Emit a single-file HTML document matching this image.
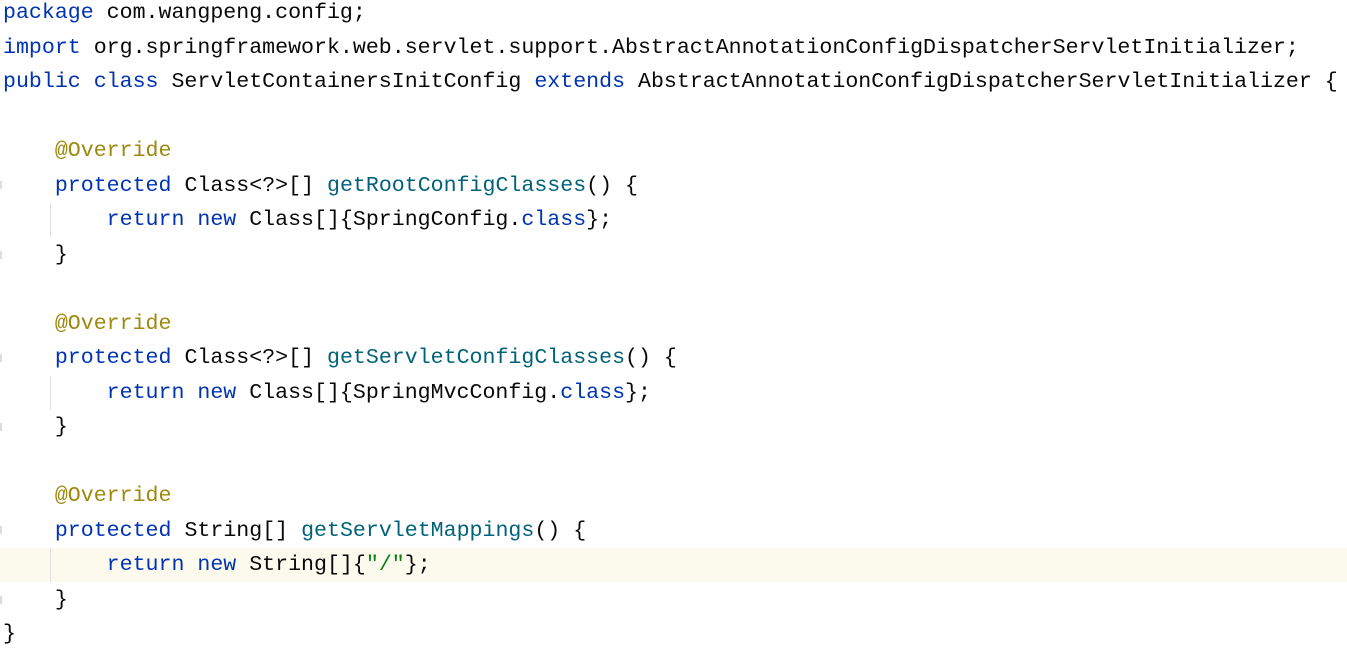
<!DOCTYPE html>
<html><head><meta charset="utf-8"><style>
body{margin:0;width:1347px;height:646px;background:#fff;overflow:hidden;position:relative;font-family:"Liberation Mono",monospace;font-size:21.6px;color:#080808}
.l{position:absolute;left:3px;height:34.5px;line-height:34.5px;white-space:pre}
.k{color:#0033b3}.m{color:#00627a}.a{color:#9e880d}.s{color:#067d17}
.hl{position:absolute;left:0;width:1347px;top:548px;height:34px;background:#fcfaed}
.g{position:absolute;left:50px;width:1px;background:#e0e0e0}
.f{position:absolute;left:0;width:2px;height:8px;background:#ddd}
</style></head><body>
<div class="hl"></div>
<div class="g" style="top:203px;height:34px"></div>
<div class="g" style="top:376px;height:34px"></div>
<div class="g" style="top:548px;height:34px"></div>
<div class="f" style="top:181px"></div><div class="f" style="top:251px"></div>
<div class="f" style="top:354px"></div><div class="f" style="top:423px"></div>
<div class="f" style="top:526px"></div><div class="f" style="top:596px"></div>
<div class="l" style="top:-4px"><span class="k">package</span> com.wangpeng.config;</div>
<div class="l" style="top:30.5px"><span class="k">import</span> org.springframework.web.servlet.support.AbstractAnnotationConfigDispatcherServletInitializer;</div>
<div class="l" style="top:65px"><span class="k">public class</span> ServletContainersInitConfig <span class="k">extends</span> AbstractAnnotationConfigDispatcherServletInitializer {</div>
<div class="l" style="top:134px">    <span class="a">@Override</span></div>
<div class="l" style="top:168.5px">    <span class="k">protected</span> Class&lt;?&gt;[] <span class="m">getRootConfigClasses</span>() {</div>
<div class="l" style="top:203px">        <span class="k">return new</span> Class[]{SpringConfig.<span class="k">class</span>};</div>
<div class="l" style="top:237.5px">    }</div>
<div class="l" style="top:306.5px">    <span class="a">@Override</span></div>
<div class="l" style="top:341px">    <span class="k">protected</span> Class&lt;?&gt;[] <span class="m">getServletConfigClasses</span>() {</div>
<div class="l" style="top:375.5px">        <span class="k">return new</span> Class[]{SpringMvcConfig.<span class="k">class</span>};</div>
<div class="l" style="top:410px">    }</div>
<div class="l" style="top:479px">    <span class="a">@Override</span></div>
<div class="l" style="top:513.5px">    <span class="k">protected</span> String[] <span class="m">getServletMappings</span>() {</div>
<div class="l" style="top:548px">        <span class="k">return new</span> String[]{<span class="s">"/"</span>};</div>
<div class="l" style="top:582.5px">    }</div>
<div class="l" style="top:617px">}</div>
</body></html>
